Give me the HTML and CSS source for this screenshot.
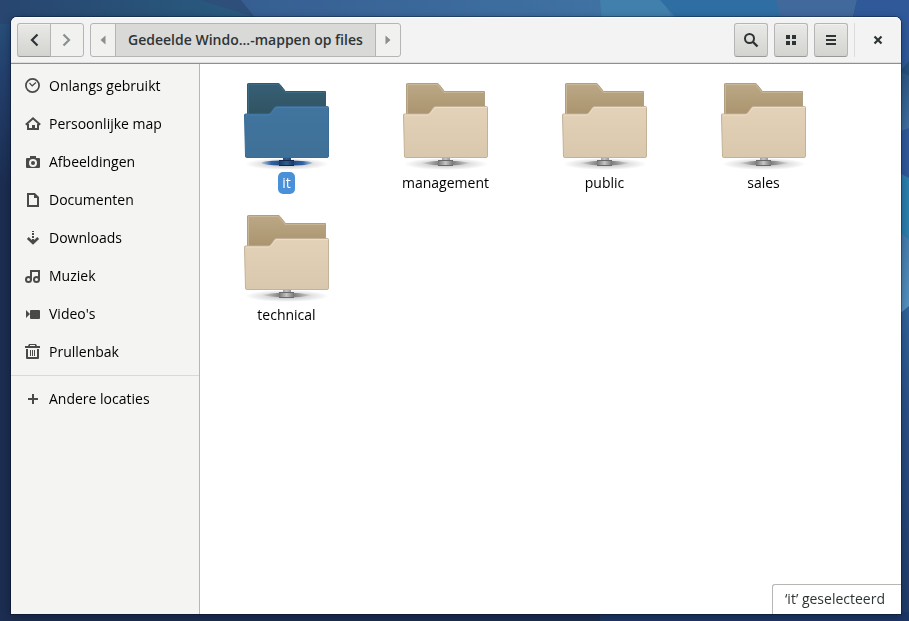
FILE: index.html
```html
<!DOCTYPE html>
<html lang="nl">
<head>
<meta charset="utf-8">
<meta name="viewport" content="width=device-width, initial-scale=1">
<title>Gedeelde Windows-mappen op files</title>
<link rel="stylesheet" href="styles.css">
</head>
<body>
<svg class="wallpaper" viewBox="0 0 909 621" preserveAspectRatio="none" aria-hidden="true">
  <defs>
    <linearGradient id="night" x1="0" y1="0" x2="0" y2="1"><stop offset="0" stop-color="#29547f"/><stop offset=".12" stop-color="#23406d"/><stop offset=".3" stop-color="#1b2d50"/><stop offset="1" stop-color="#1b2d50"/></linearGradient>
    <linearGradient id="teal" x1="0" x2="1"><stop offset="0" stop-color="#28466f"/><stop offset="1" stop-color="#295c80"/></linearGradient>
    <linearGradient id="sky" x1="0" x2="1"><stop offset="0" stop-color="#365e91"/><stop offset="1" stop-color="#4277a8"/></linearGradient>
    <linearGradient id="edge" x1="0" y1="0" x2="0" y2="1"><stop offset="0" stop-color="#30649b"/><stop offset=".35" stop-color="#2b5086"/><stop offset="1" stop-color="#203c66"/></linearGradient>
    <linearGradient id="band" x1="0" y1="0" x2="0" y2="1"><stop offset="0" stop-color="#2b5580"/><stop offset="1" stop-color="#4272a2"/></linearGradient>
    <linearGradient id="light" x1="0" y1="0" x2="0" y2="1"><stop offset="0" stop-color="#457aaa"/><stop offset="1" stop-color="#5795c3"/></linearGradient>
  </defs>
  <path fill="url(#night)" d="M0 0H909V621H0z"/>
  <path fill="url(#teal)" d="M0 0H260V24H0z"/>
  <path fill="#2f4f7b" d="M200 0H241L258 18z"/>
  <path fill="url(#sky)" d="M241 0H665L690 30H265z"/>
  <path fill="#4180ad" d="M600 0H662L680 30H603z"/>
  <path fill="#2f6ea2" d="M660 0H780L784 30H687z"/>
  <path fill="#41699c" d="M776 0H857L850 30H784z"/>
  <path fill="#30599a" d="M857 0H909V180H890V30H850z"/>
  <path fill="#245078" d="M890 83L909 61V76L901 72z"/>
  <path fill="url(#band)" d="M890 67L901 72L909 76V128L890 135z"/>
  <path fill="#2c7fae" d="M890 168L909 178V242L890 225z"/>
  <path fill="url(#edge)" d="M890 310L909 300V621H890z"/>
  <path fill="url(#light)" d="M890 225L901 233L909 240V306L890 322z"/>
  <path fill="#1d3763" d="M600 612H909V621H600z"/>
</svg>
<svg class="symbols" aria-hidden="true">
  <defs>
    <linearGradient id="tab" x1="0" y1="0" x2="0" y2="1"><stop offset="0" stop-color="#bba886"/><stop offset="1" stop-color="#a9926c"/></linearGradient>
    <linearGradient id="front" x1="0" y1="0" x2="0" y2="1"><stop offset="0" stop-color="#e3d2b8"/><stop offset="1" stop-color="#d9c8ae"/></linearGradient>
    <linearGradient id="tab-on" x1="0" y1="0" x2="0" y2="1"><stop offset="0" stop-color="#375f75"/><stop offset="1" stop-color="#30525f"/></linearGradient>
    <linearGradient id="front-on" x1="0" y1="0" x2="0" y2="1"><stop offset="0" stop-color="#41759f"/><stop offset="1" stop-color="#3f7097"/></linearGradient>
    <linearGradient id="plug" x1="0" x2="1"><stop offset="0" stop-color="#777"/><stop offset=".5" stop-color="#c4c4c4"/><stop offset="1" stop-color="#777"/></linearGradient>
    <linearGradient id="plug-on" x1="0" x2="1"><stop offset="0" stop-color="#163a66"/><stop offset=".5" stop-color="#2f5c8f"/><stop offset="1" stop-color="#163a66"/></linearGradient>
    <linearGradient id="cable" x1="0" x2="1"><stop offset="0" stop-color="#888" stop-opacity="0"/><stop offset=".4" stop-color="#777"/><stop offset=".6" stop-color="#777"/><stop offset="1" stop-color="#888" stop-opacity="0"/></linearGradient>
    <linearGradient id="cable-on" x1="0" x2="1"><stop offset="0" stop-color="#3573b5" stop-opacity=".2"/><stop offset=".2" stop-color="#2f63a5"/><stop offset=".5" stop-color="#173c70"/><stop offset=".8" stop-color="#2f63a5"/><stop offset="1" stop-color="#3573b5" stop-opacity=".2"/></linearGradient>
    <radialGradient id="shade"><stop offset="0" stop-color="#000" stop-opacity=".28"/><stop offset="1" stop-color="#000" stop-opacity="0"/></radialGradient>
  </defs>
  <symbol id="folder" viewBox="0 0 96 94">
    <ellipse cx="48" cy="86" rx="42" ry="6" fill="url(#shade)"/>
    <path d="M8.500 40V6Q8.500 5.500 9.500 5.500H39Q40 5.500 41 6.500L46.500 13.500H86.500V40z" fill="url(#tab)" stroke="#b09f80"/>
    <path d="M9.500 36V6.500H39.500L46 14.500H86" fill="none" stroke="#cfc0a2" stroke-opacity=".65"/>
    <path d="M22 85Q48 80 74 85Q48 90 22 85z" fill="url(#cable)"/>
    <path d="M44 78H52V82H55V88H40V82H44z" fill="url(#plug)"/>
    <path d="M40 82.500H55M40 87.500H55" stroke="#6a6a6a"/>
    <path d="M5.500 37Q5.500 36 6.500 36H29Q31 36 32 34.500L35.500 29.500Q36.500 28.500 38 28.500H88.500Q89.500 28.500 89.500 29.500V78Q89.500 79.500 88 79.500H7.500Q6.500 79.500 6.500 78z" fill="url(#front)" stroke="#c3b297"/>
    <path d="M7 37H30Q32 36 33 34.500L36 30.500L38 29.500H89" fill="none" stroke="#f0e2cd" stroke-opacity=".75"/>
  </symbol>
  <symbol id="folder-on" viewBox="0 0 96 94">
    <ellipse cx="48" cy="86" rx="42" ry="6" fill="url(#shade)"/>
    <path d="M8.500 40V6Q8.500 5.500 9.500 5.500H39Q40 5.500 41 6.500L46.500 13.500H86.500V40z" fill="url(#tab-on)" stroke="#315a70"/>
    <path d="M9.500 36V6.500H39.500L46 14.500H86" fill="none" stroke="#3e7089" stroke-opacity=".7"/>
    <path d="M22 85Q24 82.500 48 82.500T74 85Q70 87.500 48 87.500T22 85z" fill="url(#cable-on)"/>
    <path d="M44 78H52V82H55V88H40V82H44z" fill="url(#plug-on)"/>
    <path d="M40 82.500H55M40 87.500H55" stroke="#12294b"/>
    <path d="M5.500 37Q5.500 36 6.500 36H29Q31 36 32 34.500L35.500 29.500Q36.500 28.500 38 28.500H88.500Q89.500 28.500 89.500 29.500V78Q89.500 79.500 88 79.500H7.500Q6.500 79.500 6.500 78z" fill="url(#front-on)" stroke="#3a6c95"/>
    <path d="M7 37H30Q32 36 33 34.500L36 30.500L38 29.500H89" fill="none" stroke="#4a82b4" stroke-opacity=".8"/>
  </symbol>
</svg>

<div class="window">
  <header class="header">
    <div class="linked">
      <button class="btn btn-raised" type="button" aria-label="Terug"><svg class="icon" viewBox="0 0 16 16"><path d="M11.500 2.500L6 8l5.500 5.500" fill="none" stroke="currentColor" stroke-width="2.200"/></svg></button>
      <button class="btn" type="button" aria-label="Vooruit" disabled><svg class="icon" viewBox="0 0 16 16"><path d="M4.500 2.500L10 8 4.500 13.500" fill="none" stroke="currentColor" stroke-width="2.200"/></svg></button>
    </div>
    <nav class="linked path" aria-label="Pad">
      <button class="btn btn-step" type="button" aria-label="Vorige map"><svg class="icon" viewBox="0 0 16 16"><path d="M10.500 3.500v9L5.500 8z" fill="currentColor"/></svg></button>
      <button class="btn btn-current" type="button">Gedeelde Windo...-mappen op files</button>
      <button class="btn btn-step" type="button" aria-label="Volgende map"><svg class="icon" viewBox="0 0 16 16"><path d="M5.500 3.500v9L10.500 8z" fill="currentColor"/></svg></button>
    </nav>
    <div class="tools">
      <button class="btn btn-raised" type="button" aria-label="Zoeken"><svg class="icon" viewBox="0 0 16 16"><circle cx="6.500" cy="6.500" r="4.500" fill="none" stroke="currentColor" stroke-width="2"/><path d="M10 10l4.500 4.500" stroke="currentColor" stroke-width="2.400"/></svg></button>
      <button class="btn btn-raised" type="button" aria-label="Rasterweergave"><svg class="icon" viewBox="0 0 16 16"><path d="M3 3h4v4H3zM9 3h4v4H9zM3 9h4v4H3zM9 9h4v4H9z" fill="currentColor"/></svg></button>
      <button class="btn btn-raised" type="button" aria-label="Menu"><svg class="icon" viewBox="0 0 16 16"><path d="M3 3h10v2H3zM3 7h10v2H3zM3 11h10v2H3z" fill="currentColor"/></svg></button>
    </div>
    <button class="close" type="button" aria-label="Sluiten"><svg class="icon" viewBox="0 0 16 16"><path d="M4.500 4.500l7 7M11.500 4.500l-7 7" stroke="currentColor" stroke-width="2.200"/></svg></button>
  </header>

  <div class="body">
    <nav class="sidebar" aria-label="Locaties">
      <a class="place" href="#recent"><svg class="icon" viewBox="0 0 16 16"><circle cx="7.500" cy="7.500" r="6.600" fill="none" stroke="currentColor" stroke-width="1.700"/><path d="M4.500 5L7.200 7.800 11 4.500" fill="none" stroke="currentColor" stroke-width="1.200"/></svg>Onlangs gebruikt</a>
      <a class="place" href="#home"><svg class="icon" viewBox="0 0 16 16"><path d="M.8 8.800L8 2.300l7.200 6.500" fill="none" stroke="currentColor" stroke-width="2"/><path d="M2 8h2v4h3V9h3v3h2V8h2v6H2z" fill="currentColor"/></svg>Persoonlijke map</a>
      <a class="place" href="#pictures"><svg class="icon" viewBox="0 0 16 16"><path fill-rule="evenodd" fill="currentColor" d="M5 2h6v2h3q1 0 1 1v8q0 1-1 1H2q-1 0-1-1V5q0-1 1-1h3zM8 5a4 4 0 100 8 4 4 0 000-8zM8 7a2 2 0 110 4 2 2 0 010-4z"/></svg>Afbeeldingen</a>
      <a class="place" href="#documents"><svg class="icon" viewBox="0 0 16 16"><path d="M3 2h6.500L13 5.500V14H3z" fill="none" stroke="currentColor" stroke-width="2"/><path d="M9 2v4h4z" fill="currentColor"/></svg>Documenten</a>
      <a class="place" href="#downloads"><svg class="icon" viewBox="0 0 16 16"><path d="M7 1h2v1H7zM7 3h2v2H7zM7 6h2v2H7zM7 9h2v3H7z" fill="currentColor"/><path d="M2.800 8L8 13 13.200 8" fill="none" stroke="currentColor" stroke-width="2.600"/></svg>Downloads</a>
      <a class="place" href="#music"><svg class="icon" viewBox="0 0 16 16"><g fill="none" stroke="currentColor" stroke-width="2"><circle cx="3.500" cy="11.500" r="2.500"/><circle cx="11.500" cy="11.500" r="2.500"/><path d="M6 12V3h8V12"/></g><path d="M5 2h10v2H5z" fill="currentColor"/></svg>Muziek</a>
      <a class="place" href="#videos"><svg class="icon" viewBox="0 0 16 16"><path d="M1 4l4 4-4 4z" fill="currentColor"/><rect x="5" y="4" width="10" height="9" rx="1" fill="currentColor"/></svg>Video's</a>
      <a class="place" href="#trash"><svg class="icon" viewBox="0 0 16 16"><path d="M0 2h3l1-2h7l1 2h3v2H0zM5 1v1h5V1zM1 5h2v8h9V5h2v9q0 1-1 1H2q-1 0-1-1z" fill="currentColor" fill-rule="evenodd"/><path d="M5 6h1v6H5zM7 6h1v6H7zM9 6h1v6H9z" fill="currentColor"/></svg>Prullenbak</a>
      <hr class="rule">
      <a class="place" href="#other"><svg class="icon" viewBox="0 0 16 16"><path d="M3 7h4V3h2v4h4v2H9v4H7V9H3z" fill="currentColor"/></svg>Andere locaties</a>
    </nav>
    <main class="content">
      <ul class="files">
        <li class="file file-selected"><svg class="folder" aria-hidden="true"><use href="#folder-on"/></svg><span class="name">it</span></li>
        <li class="file"><svg class="folder" aria-hidden="true"><use href="#folder"/></svg><span class="name">management</span></li>
        <li class="file"><svg class="folder" aria-hidden="true"><use href="#folder"/></svg><span class="name">public</span></li>
        <li class="file"><svg class="folder" aria-hidden="true"><use href="#folder"/></svg><span class="name">sales</span></li>
        <li class="file"><svg class="folder" aria-hidden="true"><use href="#folder"/></svg><span class="name">technical</span></li>
      </ul>
      <p class="status" role="status">‘it’ geselecteerd</p>
    </main>
  </div>
</div>
</body>
</html>
```

FILE: styles.css
```css
* {
  box-sizing: border-box;
}

body {
  margin: 0;
  height: 100vh;
  padding: 17px 8px 7px 11px;
  background: #1b2d50;
  color: #000;
  font: 14px/22px "Open Sans", "Noto Sans", sans-serif;
}

.wallpaper {
  position: fixed;
  inset: 0;
  z-index: -1;
  width: 100%;
  height: 100%;
}

.symbols {
  position: absolute;
  width: 0;
  height: 0;
}

.icon {
  display: block;
  flex: none;
  width: 16px;
  height: 16px;
}

.window {
  display: flex;
  flex-direction: column;
  height: 100%;
  overflow: hidden;
  border-radius: 6px 6px 0 0;
  background: #fff;
  box-shadow: 0 0 0 1px rgba(0, 10, 30, 0.35), 0 2px 8px rgba(0, 10, 30, 0.4);
}

.header {
  display: flex;
  flex: none;
  align-items: center;
  gap: 6px;
  height: 47px;
  padding: 0 6px;
  border-bottom: 1px solid #8f908c;
  background: #f3f3f3;
  box-shadow: inset 0 1px #fff, inset 0 -1px #dededc;
}

.linked,
.tools {
  display: flex;
}

.tools {
  gap: 6px;
  margin-left: auto;
}

.btn {
  display: flex;
  align-items: center;
  justify-content: center;
  width: 34px;
  height: 34px;
  padding: 0;
  border: 1px solid #b5b5b3;
  border-radius: 3px;
  background: #f1f1f0;
  color: #2e3436;
  font: inherit;
}

.btn:disabled {
  color: #8b8e8f;
}

.btn-raised {
  border-bottom-color: #989896;
  background: linear-gradient(#e9e9e7, #d3d3d0);
  box-shadow: inset 0 1px #f2f2f1;
}

.linked .btn + .btn {
  margin-left: -1px;
  border-top-left-radius: 0;
  border-bottom-left-radius: 0;
}

.linked .btn:not(:last-child) {
  border-top-right-radius: 0;
  border-bottom-right-radius: 0;
}

.path .btn-step {
  width: 26px;
  color: #8b8e8f;
}

.path .btn-current {
  width: auto;
  padding: 0 12px;
  background: #d9d9d7;
  color: #2e3436;
  font-weight: 600;
  white-space: nowrap;
}

.close {
  display: flex;
  align-items: center;
  justify-content: center;
  width: 41px;
  height: 34px;
  padding: 0 0 0 6px;
  border: 0;
  border-left: 1px solid #dcdcda;
  background: none;
  color: #2e3436;
}

.body {
  display: flex;
  flex: 1;
  min-height: 0;
}

.sidebar {
  flex: none;
  width: 189px;
  padding-top: 3px;
  border-right: 1px solid #b6b6b3;
  background: #f4f4f2;
}

.place {
  display: flex;
  align-items: center;
  gap: 8px;
  height: 38px;
  padding: 0 14px;
  color: #000;
  text-decoration: none;
  white-space: nowrap;
}

.place .icon {
  color: #4a4a48;
}

.rule {
  height: 1px;
  margin: 4px 0;
  border: 0;
  background: #d9d9d7;
}

.content {
  display: flex;
  flex: 1;
  flex-direction: column;
  min-width: 0;
  background: #fff;
}

.files {
  display: grid;
  flex: 1;
  grid-template-columns: repeat(auto-fill, 159px);
  align-content: start;
  row-gap: 16px;
  margin: 0;
  padding: 14px 7px 0;
  list-style: none;
}

.file {
  display: flex;
  flex-direction: column;
  align-items: center;
}

.folder {
  width: 96px;
  height: 94px;
}

.name {
  padding: 0 4px;
  border-radius: 5px;
}

.file-selected .name {
  background: #4a90d9;
  color: #fff;
}

.status {
  align-self: flex-end;
  margin: 0;
  padding: 3px 16px 4px 12px;
  border: 1px solid #b6b6b3;
  border-right: 0;
  border-bottom: 0;
  border-radius: 3px 0 0;
  color: #2e3436;
}
```
